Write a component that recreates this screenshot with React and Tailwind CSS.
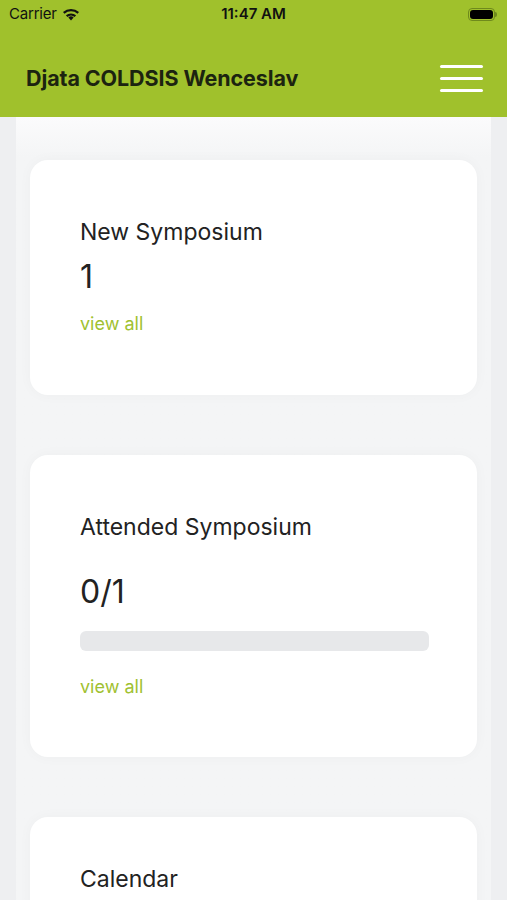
import React from "react";

const font = { fontFamily: "Inter, 'Noto Sans', sans-serif" };

function StatusBar() {
  return (
    <div className="h-[28px] flex items-center justify-between px-[9px] text-[15px] text-[#111]">
      <div className="flex items-center gap-[5px] w-[120px]">
        <span className="tracking-[-0.2px]">Carrier</span>
        <svg width="18" height="13" viewBox="0 0 18 13">
          <path d="M9 12.5l2.6-3.1a4 4 0 0 0-5.2 0z" fill="#111" />
          <path d="M3.9 7.3a7.8 7.8 0 0 1 10.2 0l-1.5 1.8a5.5 5.5 0 0 0-7.2 0z" fill="#111" />
          <path d="M1 4a12.2 12.2 0 0 1 16 0l-1.5 1.8a9.8 9.8 0 0 0-13 0z" fill="#111" />
        </svg>
      </div>
      <span className="font-semibold">11:47 AM</span>
      <div className="w-[120px] flex justify-end pr-[1px]">
        <div className="flex items-center">
          <div className="w-[27px] h-[13px] rounded-[4px] border border-[#6f8a1c] p-[1px]">
            <div className="w-full h-full rounded-[3px] bg-black" />
          </div>
          <div className="w-[2px] h-[5px] rounded-r-sm bg-[#6f8a1c]" />
        </div>
      </div>
    </div>
  );
}

function Card({ title, value, progress, className }) {
  return (
    <div className={`bg-white rounded-[18px] shadow-[0_0_14px_rgba(0,0,0,0.03)] pl-[50px] pr-[48px] ${className}`}>
      <div className="text-[23px] text-[#222] leading-[28px]">{title}</div>
      {progress === undefined ? (
        <>
          <div className="text-[32px] text-[#222] leading-[40px] mt-[11px]">{value}</div>
          <div className="text-[18px] text-[#9fc131] leading-[24px] mt-[15px]">view all</div>
        </>
      ) : (
        <>
          <div className="text-[32px] text-[#222] leading-[40px] mt-[31px]">{value}</div>
          <div className="h-[20px] rounded-[6px] bg-[#e7e8ea] mt-[19px] overflow-hidden">
            <div className="h-full bg-[#9fc131]" style={{ width: `${progress * 100}%` }} />
          </div>
          <div className="text-[18px] text-[#9fc131] leading-[24px] mt-[24px]">view all</div>
        </>
      )}
    </div>
  );
}

export default function App() {
  return (
    <div className="w-[507px] h-[900px] overflow-hidden bg-[#eeeff1] flex flex-col" style={font}>
      <div className="bg-[#a0c12c] h-[117px] shrink-0">
        <StatusBar />
        <div className="flex items-center justify-between pl-[26px] pr-[24px] mt-[34px]">
          <span className="text-[21.5px] font-bold text-[#1c2410] tracking-[-0.1px]">Djata COLDSIS Wenceslav</span>
          <div className="flex flex-col gap-[9px] w-[43px]">
            <div className="h-[3px] bg-white rounded-full" />
            <div className="h-[3px] bg-white rounded-full" />
            <div className="h-[3px] bg-white rounded-full" />
          </div>
        </div>
      </div>
      <div className="mx-[16px] flex-1 bg-gradient-to-b from-[#fbfbfc] to-[#f4f5f6] to-[40px] px-[14px] pt-[43px] flex flex-col gap-[60px]">
        <Card title="New Symposium" value="1" className="h-[235px] pt-[58px]" />
        <Card title="Attended Symposium" value="0/1" progress={0} className="h-[302px] pt-[58px]" />
        <div className="bg-white rounded-[18px] shadow-[0_0_14px_rgba(0,0,0,0.03)] pl-[50px] pt-[48px] h-[200px]">
          <div className="text-[23px] text-[#222] leading-[28px]">Calendar</div>
        </div>
      </div>
    </div>
  );
}
